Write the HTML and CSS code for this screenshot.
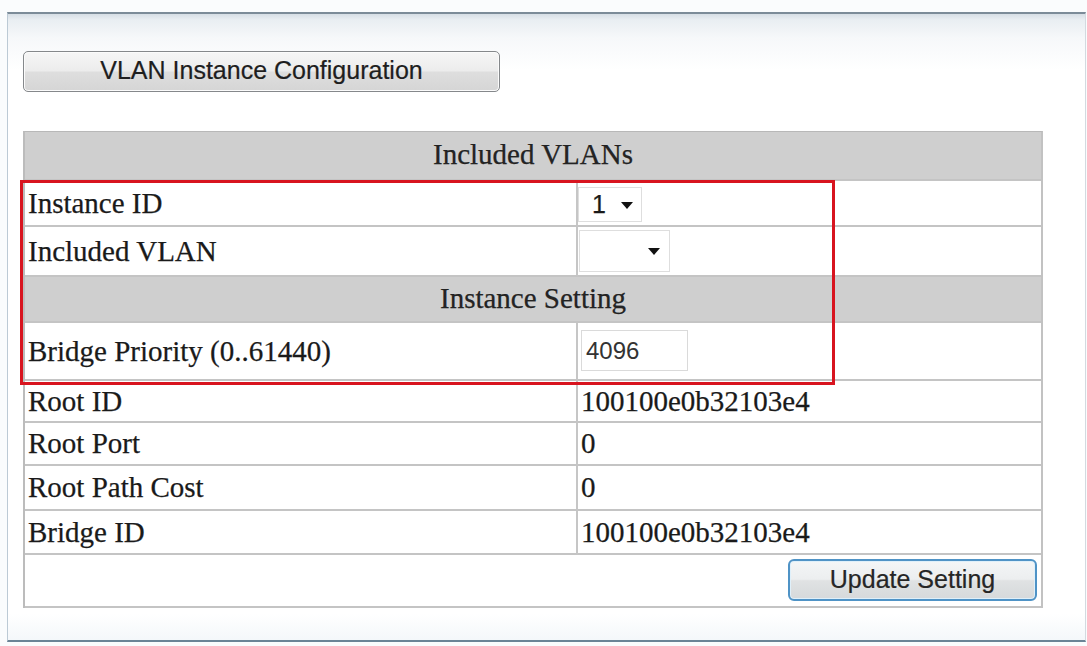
FILE: index.html
```html
<!DOCTYPE html>
<html lang="en">
<head>
<meta charset="utf-8">
<title>VLAN Instance Configuration</title>
<link rel="stylesheet" href="styles.css">
</head>
<body>
<div class="frame">
  <button class="tab-btn" type="button">VLAN Instance Configuration</button>
  <div class="table-wrap">
    <div class="grid">
      <div class="cell head span r1">Included VLANs</div>

      <div class="cell label r2">Instance ID</div>
      <div class="cell value r2">
        <div class="select s1"><span class="sel-text">1</span><i class="caret"></i></div>
      </div>

      <div class="cell label r3">Included VLAN</div>
      <div class="cell value r3">
        <div class="select s2"><span class="sel-text"></span><i class="caret"></i></div>
      </div>

      <div class="cell head span r4">Instance Setting</div>

      <div class="cell label r5">Bridge Priority (0..61440)</div>
      <div class="cell value r5">
        <div class="input">4096</div>
      </div>

      <div class="cell label">Root ID</div>
      <div class="cell value">100100e0b32103e4</div>

      <div class="cell label">Root Port</div>
      <div class="cell value">0</div>

      <div class="cell label">Root Path Cost</div>
      <div class="cell value">0</div>

      <div class="cell label">Bridge ID</div>
      <div class="cell value">100100e0b32103e4</div>

      <div class="cell action span">
        <button class="update-btn" type="button">Update Setting</button>
      </div>
    </div>
    <div class="highlight"></div>
  </div>
</div>
</body>
</html>
```

FILE: styles.css
```css
* { box-sizing: border-box; }

html, body {
  margin: 0;
  padding: 0;
}

body {
  width: 1087px;
  height: 646px;
  overflow: hidden;
  background: #fafcfd;
  font-family: "Liberation Serif", "Times New Roman", serif;
  color: #1a1a1a;
}

.frame {
  margin: 12px 0 0 7px;
  width: 1079px;
  height: 630px;
  border-top: 2px solid #7b8b98;
  border-bottom: 2px solid #6b8496;
  border-left: 1px solid #bccad5;
  border-right: 1px solid #d3dae0;
  background: linear-gradient(to bottom, #d6dee5 0, #e9eef2 6px, #f6f8fa 24px, #ffffff 56px, #ffffff 600px, #f3f7fa 628px);
  padding: 37px 0 0 15px;
}

.tab-btn {
  display: block;
  width: 477px;
  height: 41px;
  margin: 0;
  padding: 0 0 2px 0;
  border: 1px solid #85888b;
  border-radius: 5px;
  background: linear-gradient(to bottom, #f6f6f6 0%, #ececec 48%, #dedede 52%, #d5d5d5 100%);
  box-shadow: inset 0 0 0 1px #fbfbfb;
  font-family: "Liberation Sans", Arial, sans-serif;
  font-size: 25px;
  color: #1e1e1e;
  -webkit-text-stroke: 0.2px #1e1e1e;
  text-align: center;
}

.table-wrap {
  position: relative;
  margin-top: 39px;
  width: 1020px;
}

.grid {
  display: grid;
  grid-template-columns: 553px 463px;
  grid-template-rows: 49px 46px 50px 46px 58px 42px 43px 45px 44px 53px;
  border-top: 1px solid #b8b8b8;
  border-left: 2px solid #bcbcbc;
  border-right: 2px solid #c2c2c2;
  background: #fff;
}

.cell {
  display: flex;
  align-items: center;
  border-bottom: 2px solid #c4c4c4;
  font-size: 29px;
  line-height: 1;
  white-space: nowrap;
  -webkit-text-stroke: 0.25px #1a1a1a;
}

.label {
  border-right: 2px solid #c6c6c6;
  padding-left: 3px;
}

.value {
  padding-left: 3px;
}

.span {
  grid-column: 1 / span 2;
}

.head {
  justify-content: center;
  background: #cfcfcf;
  color: #242424;
  padding-bottom: 2px;
}

.select {
  position: relative;
  background: #fff;
  border: 1px solid #dedede;
  font-family: "Liberation Sans", Arial, sans-serif;
  font-size: 25px;
  color: #1a1a1a;
}

.s1 {
  width: 64px;
  height: 35px;
  margin-left: -3px;
  margin-top: 3px;
}

.s2 {
  width: 91px;
  height: 42px;
  margin-left: -2px;
}

.sel-text {
  position: absolute;
  left: 13px;
  top: 4px;
}

.caret {
  position: absolute;
  top: 50%;
  margin-top: -3px;
  width: 0;
  height: 0;
  border-left: 6px solid transparent;
  border-right: 6px solid transparent;
  border-top: 7px solid #111;
}

.s1 .caret { right: 8px; }
.s2 .caret { right: 9px; }

.input {
  width: 107px;
  height: 41px;
  border: 1px solid #dadada;
  background: #fff;
  font-family: "Liberation Sans", Arial, sans-serif;
  font-size: 24px;
  color: #333;
  -webkit-text-stroke: 0;
  padding: 8px 0 0 4px;
  margin-top: -1px;
}

.action {
  justify-content: flex-end;
  padding-right: 4px;
}

.update-btn {
  width: 249px;
  height: 42px;
  margin: 0 0 1px 0;
  padding: 0 0 2px 0;
  border: 2px solid #4f93c6;
  border-radius: 6px;
  background: linear-gradient(to bottom, #f4f6f7 0%, #eceeef 48%, #e0e2e3 52%, #d6d9db 100%);
  box-shadow: inset 0 0 0 1px #dff0fa;
  font-family: "Liberation Sans", Arial, sans-serif;
  font-size: 25px;
  color: #262626;
  -webkit-text-stroke: 0.2px #262626;
  text-align: center;
}

.highlight {
  position: absolute;
  left: -3px;
  top: 49px;
  width: 815px;
  height: 205px;
  border: 3px solid #d8141f;
  pointer-events: none;
}
```
